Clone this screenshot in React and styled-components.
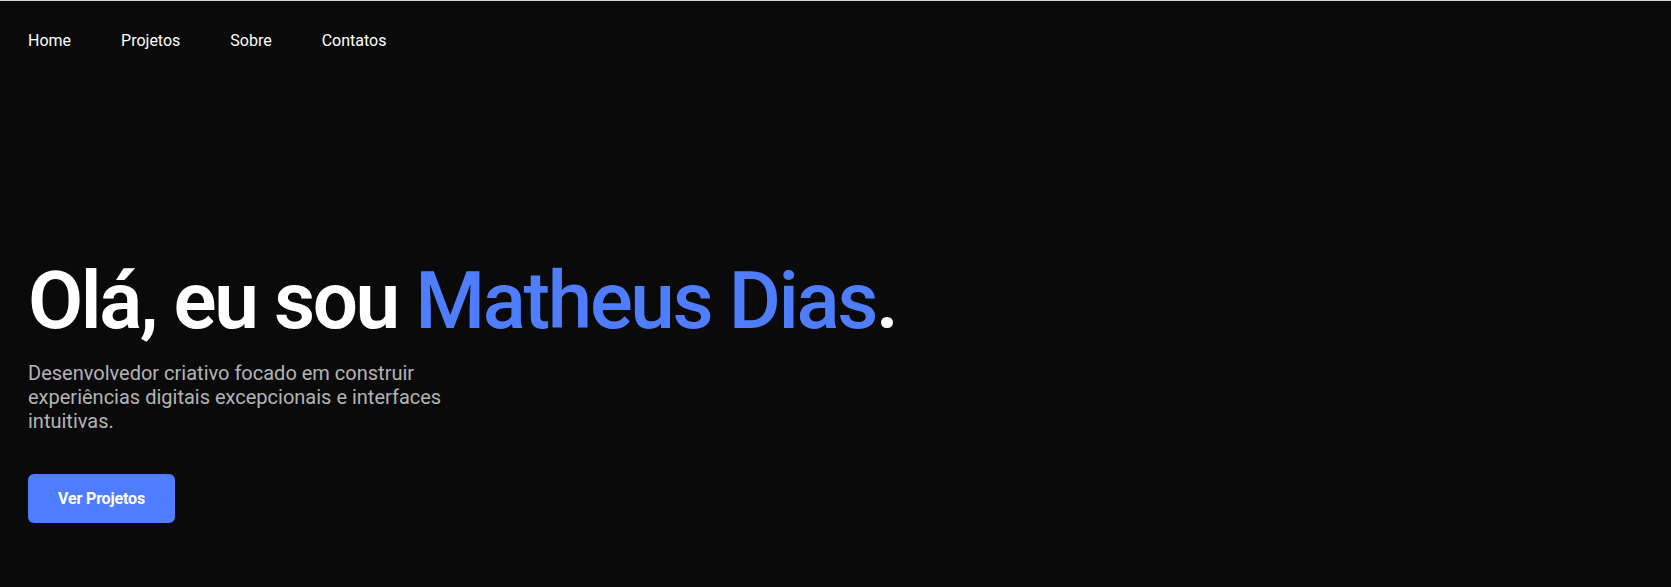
import React from "react";
import styled, { createGlobalStyle } from "styled-components";

const GlobalStyle = createGlobalStyle`
  * {
    box-sizing: border-box;
  }
  html, body {
    margin: 0;
    padding: 0;
    background-color: #0a0a0a;
  }
  body {
    font-family: Roboto, "Liberation Sans", Arial, sans-serif;
    color: #ffffff;
  }
`;

const links = ["Home", "Projetos", "Sobre", "Contatos"];

const App = () => {
  return (
    <>
      <GlobalStyle />
      <Page>
        <Nav>
          {links.map((link) => (
            <NavLink key={link} href="#">
              {link}
            </NavLink>
          ))}
        </Nav>
        <Hero>
          <Title>
            Olá, eu sou <Highlight>Matheus Dias</Highlight>.
          </Title>
          <Subtitle>
            Desenvolvedor criativo focado em construir experiências digitais
            excepcionais e interfaces intuitivas.
          </Subtitle>
          <Button>Ver Projetos</Button>
        </Hero>
      </Page>
    </>
  );
};

const Page = styled.div`
  min-height: 100vh;
  background-color: #0a0a0a;
  border-top: 1px solid #d8d8d8;
  display: flex;
  flex-direction: column;
`;

const Nav = styled.nav`
  display: flex;
  align-items: center;
  gap: 50px;
  padding: 28px 28px 27px;
`;

const NavLink = styled.a`
  color: #ffffff;
  text-decoration: none;
  font-size: 16px;
  line-height: 24px;
  font-weight: 400;
`;

const Hero = styled.section`
  display: flex;
  flex-direction: column;
  align-items: flex-start;
  padding: 177px 28px 0;
`;

const Title = styled.h1`
  margin: 0 0 16px;
  font-size: 80px;
  line-height: 1.1;
  font-weight: 600;
  letter-spacing: -0.03em;
  color: #ffffff;
`;

const Highlight = styled.span`
  color: #4f7dff;
  font-weight: 500;
`;

const Subtitle = styled.p`
  margin: 0 0 41px;
  max-width: 460px;
  font-size: 20px;
  line-height: 24px;
  color: #b4b4b4;
`;

const Button = styled.button`
  display: flex;
  align-items: center;
  justify-content: center;
  width: 147px;
  height: 49px;
  border: none;
  border-radius: 6px;
  background-color: #4f7dff;
  color: #ffffff;
  font-family: inherit;
  font-size: 16px;
  font-weight: 700;
  letter-spacing: -0.01em;
  cursor: pointer;
`;

export default App;
